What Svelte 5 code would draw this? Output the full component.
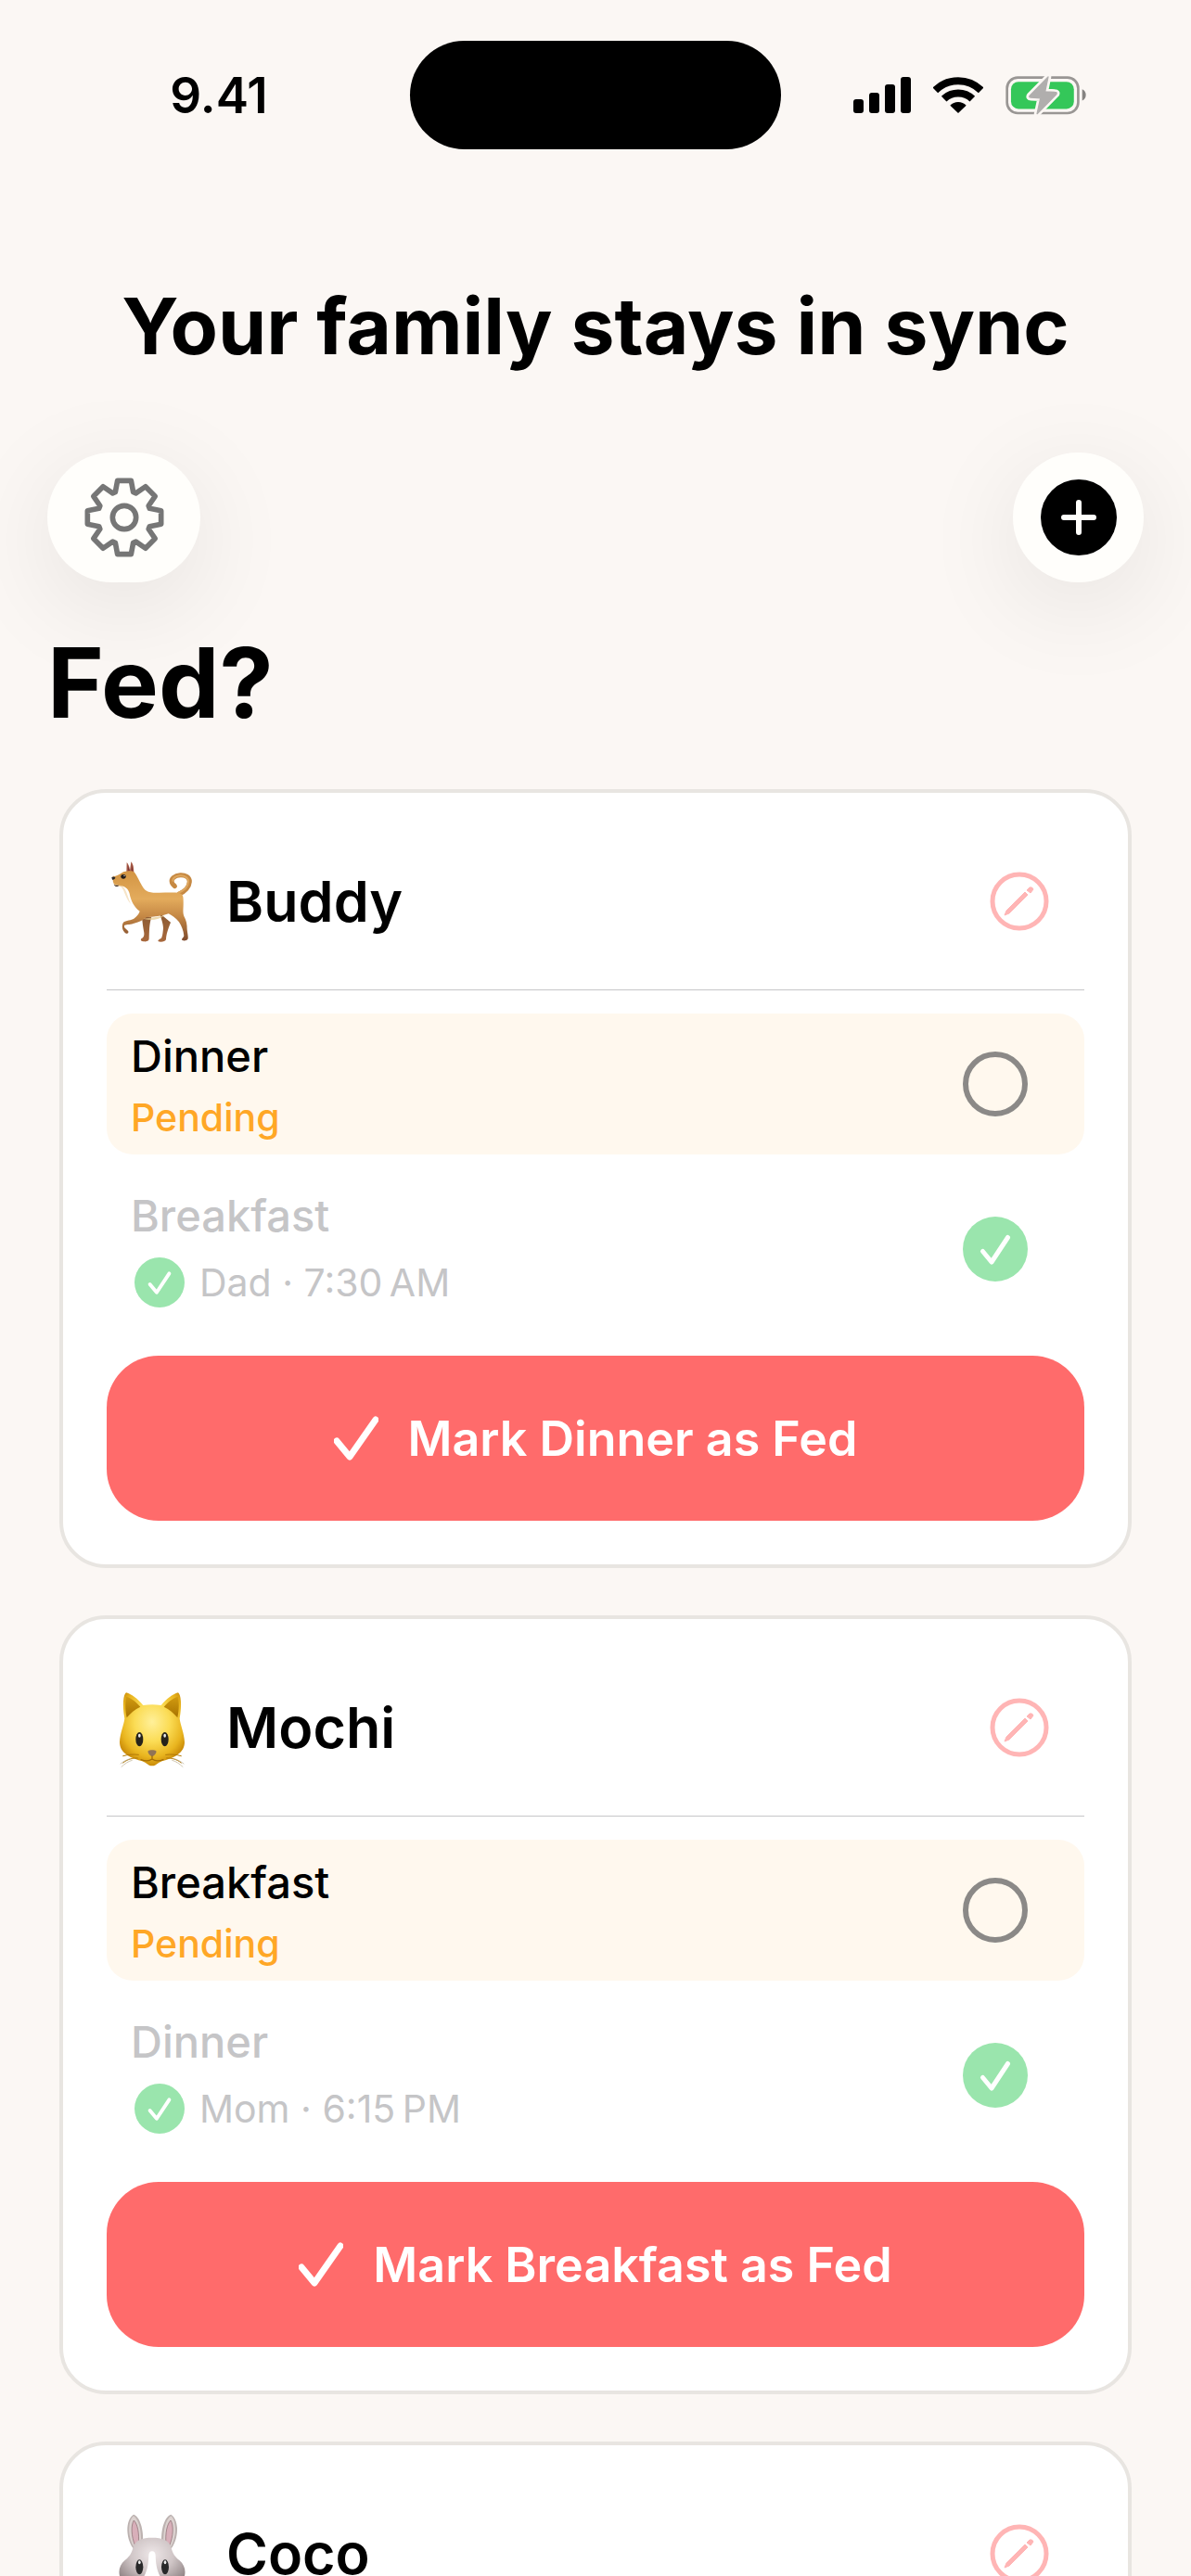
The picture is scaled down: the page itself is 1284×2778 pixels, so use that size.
<script lang="ts">
	type Meal = {
		name: string;
		fedBy?: string;
		time?: string;
	};

	type Pet = {
		name: string;
		kind: 'dog' | 'cat' | 'rabbit';
		meals: Meal[];
	};

	const pets: Pet[] = [
		{
			name: 'Buddy',
			kind: 'dog',
			meals: [{ name: 'Dinner' }, { name: 'Breakfast', fedBy: 'Dad', time: '7:30\u202fAM' }]
		},
		{
			name: 'Mochi',
			kind: 'cat',
			meals: [{ name: 'Breakfast' }, { name: 'Dinner', fedBy: 'Mom', time: '6:15\u202fPM' }]
		},
		{ name: 'Coco', kind: 'rabbit', meals: [] }
	];

	// one tooth of the gear, repeated every 45 degrees
	const tooth = [
		[-29, -82],
		[-22, -119],
		[22, -119],
		[29, -82]
	];

	function gearPoints(): string {
		const points: string[] = [];
		for (let i = 0; i < 8; i++) {
			const a = (i * Math.PI) / 4;
			for (const [x, y] of tooth) {
				const px = x * Math.cos(a) - y * Math.sin(a);
				const py = x * Math.sin(a) + y * Math.cos(a);
				points.push(`${px.toFixed(1)},${py.toFixed(1)}`);
			}
		}
		return points.join(' ');
	}

	function nextMeal(pet: Pet): Meal | undefined {
		return pet.meals.find((meal) => !meal.fedBy);
	}
</script>

{#snippet checkCircle()}
	<svg viewBox="0 0 70 70" aria-hidden="true">
		<circle cx="35" cy="35" r="35" fill="#9ae5ad" />
		<path
			d="M21.500 37.500 31 49 48.500 22.500"
			fill="none"
			stroke="#fff"
			stroke-width="5"
			stroke-linecap="round"
			stroke-linejoin="round"
		/>
	</svg>
{/snippet}

{#snippet petIcon(kind: Pet['kind'])}
	<svg class="petIcon" viewBox={kind === 'dog' ? '15 37 294 294' : '0 0 294 294'} aria-hidden="true">
		{#if kind === 'dog'}
			<defs>
				<linearGradient id="dogCoat" x1="0" y1="0" x2="0" y2="1">
					<stop offset="0" stop-color="#d39544" />
					<stop offset="0.4" stop-color="#e3ab5c" />
					<stop offset="0.65" stop-color="#c58845" />
					<stop offset="1" stop-color="#7e4a2c" />
				</linearGradient>
				<linearGradient id="dogLeg" x1="0" y1="0" x2="0" y2="1">
					<stop offset="0" stop-color="#8a5a33" />
					<stop offset="1" stop-color="#a8683c" />
				</linearGradient>
			</defs>
			<path
				d="M129 230c1 22 4 40 7 56 1 8-1 15-9 19-4 6 1 9 8 9 12 1 17-2 17-9 1-24 0-45 8-70zM186 222c7 22 12 36 12 49-1 12-2 25-6 32-6 3-11 5-11 10 7 4 24 2 26-6 1-17 6-32 15-55z"
				fill="url(#dogLeg)"
			/>
			<path
				d="M250 160c18-8 32-23 33-39 1-15-14-23-30-22-18 1-31 12-27 24 2 6 7 9 9 12"
				fill="none"
				stroke="#c68943"
				stroke-width="15"
				stroke-linecap="round"
			/>
			<path
				d="M245 157c20-7 33-21 34-36 1-14-13-21-27-20-14 1-24 8-23 16"
				fill="none"
				stroke="#dea75f"
				stroke-width="6"
				stroke-linecap="round"
			/>
			<path
				d="M79 92 80 58c5 5 9 14 10 26l4-28c7 8 9 18 9 38z"
				fill="#a85c47"
			/>
			<path d="M84 84 83 67l7 18zM95 84l1-20 4 23z" fill="#7c3335" />
			<path
				d="M32 106C45 103 55 98 64 92c12-7 30-8 41-2 9 12 15 28 24 43 6 11 13 18 21 20 24 7 71 0 99 4 12 3 14 11 14 24 1 22-3 38 2 51 8 14 10 26 10 43 1 10 4 24 3 30-4 9-20 7-20 3 0-5 7-7 7-13-2-17-8-32-16-44-10-13-24-22-34-27-22 8-48 11-71 11-10 10-26 17-43 21-12 4-25 2-29 7-2 7 8 12 13 18 2 11-10 8-13 2-7-8-9-22-3-31 7-7 27-7 34-12 10-8 17-16 19-24-18-14-29-34-33-57-4-14-10-20-21-24-14-2-27 0-31-10-3-8-3-18 2-24z"
				fill="url(#dogCoat)"
			/>
			<path d="M37 127c12 2 23 2 29 8 12 8 16 31 27 58-19-20-20-47-32-56-9-2-19 0-24-10z" fill="#e9bb74" opacity=".4" />
			<path d="M133 240c25-2 48-6 70-10-18 14-48 18-70 10z" fill="#e5c98d" opacity=".7" />
			<path d="M31 107c4-4 10-3 12 0 0 5-6 8-10 7z" fill="#29272a" />
			<path d="M38 129c5 4 12 4 17 3-4 6-13 6-17-3z" fill="#37251d" />
			<ellipse cx="69" cy="104" rx="8" ry="7" fill="#231c19" />
			<circle cx="72" cy="101" r="2" fill="#fff" />
		{:else if kind === 'cat'}
			<defs>
				<radialGradient id="catFace" cx=".5" cy=".4" r=".6">
					<stop offset="0" stop-color="#fff09a" />
					<stop offset=".45" stop-color="#fbdc55" />
					<stop offset=".8" stop-color="#e9b51f" />
					<stop offset="1" stop-color="#c98a08" />
				</radialGradient>
				<linearGradient id="catEar" x1="0" y1="0" x2="0" y2="1">
					<stop offset="0" stop-color="#d19a10" />
					<stop offset="1" stop-color="#a87300" />
				</linearGradient>
			</defs>
			<path
				d="M63 34c18 5 38 21 55 41q29-5 58 0c17-20 37-36 55-41 9 6 13 39 5 84 2 20 15 49 16 76 0 35-35 51-68 60-14 2-24 17-37 17s-23-15-37-17c-33-9-68-25-68-60 1-27 14-56 16-76-8-45-4-78 5-84z"
				fill="url(#catFace)"
			/>
			<path d="M64 47c16 5 33 18 45 33-18 8-32 21-44 35-5-24-6-52-1-68zM230 47c-16 5-33 18-45 33 18 8 32 21 44 35 5-24 6-52 1-68z" fill="url(#catEar)" />
			<ellipse cx="106" cy="185" rx="12" ry="23" fill="#26231b" />
			<ellipse cx="188" cy="185" rx="12" ry="23" fill="#26231b" />
			<ellipse cx="106" cy="173" rx="4" ry="6" fill="#eee" />
			<ellipse cx="188" cy="173" rx="4" ry="6" fill="#eee" />
			<path d="M134 223c6-4 20-4 26 0 3 5-8 18-13 18s-16-13-13-18z" fill="#917456" />
			<g fill="none" stroke-linecap="round">
				<path d="M147 240v10M111 251c13 5 27 5 36-2 9 7 23 7 36 2" stroke="#a56e05" stroke-width="4" />
				<path d="M103 235c-17-2-33-1-50 4M100 246c-17-1-33 4-47 15M191 235c17-2 33-1 50 4M194 246c17-1 33 4 47 15" stroke="#b27a08" stroke-width="3" />
				<path d="M76 248c-13 3-23 10-31 16M82 253c-14 4-24 12-34 21M218 248c13 3 23 10 31 16M212 253c14 4 24 12 34 21" stroke="#b8aa8d" stroke-width="2" />
			</g>
		{:else}
			<defs>
				<radialGradient id="rabbitFace" cx=".5" cy=".3" r=".65">
					<stop offset="0" stop-color="#eee7e8" />
					<stop offset=".5" stop-color="#d0c6c7" />
					<stop offset="1" stop-color="#8d8182" />
				</radialGradient>
			</defs>
			<path d="M87 20c19 5 34 47 30 94l-31 16c-14-17-20-46-19-66 1-20 9-38 20-44zM208 20c-19 5-34 47-30 94l31 16c14-17 20-46 19-66-1-20-9-38-20-44z" fill="#bcb2b0" />
			<path d="M87 25c15 8 26 44 24 87l-24 12c-10-19-16-43-14-62 1-18 6-31 14-37zM208 25c-15 8-26 44-24 87l24 12c10-19 16-43 14-62-1-18-6-31-14-37z" fill="#dcd2d0" />
			<path d="M88 39c12 12 18 42 15 76l-11 6c-13-31-14-67-4-82zM207 39c-12 12-18 42-15 76l11 6c13-31 14-67 4-82z" fill="#d8afb9" stroke="#85686d" stroke-width="2" />
			<path
				d="M147 95c31 0 56 7 62 33 5 20 12 28 26 40 31 25 22 75-19 90-25 10-44 15-69 15s-44-5-69-15c-41-15-50-65-19-90 14-12 21-20 26-40 6-26 31-33 62-33z"
				fill="url(#rabbitFace)"
			/>
			<path d="M147 139c7 0 11 5 11 14 1 24 3 49 18 72l-29 27-29-27c15-23 17-48 18-72 0-9 4-14 11-14z" fill="#fff" />
			<ellipse cx="106" cy="190" rx="12" ry="24" fill="#29292a" />
			<ellipse cx="189" cy="190" rx="12" ry="24" fill="#29292a" />
			<ellipse cx="106" cy="175" rx="4" ry="6" fill="#eee" />
			<ellipse cx="189" cy="175" rx="4" ry="6" fill="#eee" />
			<path d="M137 226h20l-10 12z" fill="#d8909c" />
		{/if}
	</svg>
{/snippet}

<div class="screen">
	<div class="statusBar">
		<div class="statusTime">9.41</div>
		<div class="island"></div>
		<div class="statusIcons">
			<svg class="signal" viewBox="0 0 62 39" aria-hidden="true">
				<rect x="0" y="24" width="11" height="15" rx="3" />
				<rect x="17" y="17" width="11" height="22" rx="3" />
				<rect x="34" y="8" width="11" height="31" rx="3" />
				<rect x="51" y="0" width="11" height="39" rx="3" />
			</svg>
			<svg class="wifi" viewBox="-81 -117 162 117" aria-hidden="true">
				<path d="M-74-74A105 105 0 0 1 74-74M-46-46A66 66 0 0 1 46-46" fill="none" stroke="#000" stroke-width="24" />
				<path d="M0 0-26-25A37 37 0 0 1 26-25Z" />
			</svg>
			<svg class="battery" viewBox="612 64 264 130" aria-hidden="true">
				<rect x="616" y="72" width="232" height="116" rx="35" fill="none" stroke="#999694" stroke-width="8" />
				<rect x="629" y="86" width="205" height="88" rx="24" fill="#34c759" />
				<path d="M861 110c16 7 16 30 0 37z" fill="#858381" />
				<path
					d="M750 70 690 131Q686 137 694 137L725 139 714 190 777 126Q780 120 772 120L740 118Z"
					fill="#fbf7f4"
					stroke="#fbf7f4"
					stroke-width="20"
					stroke-linejoin="round"
				/>
				<path
					d="M750 70 690 131Q686 137 694 137L725 139 714 190 777 126Q780 120 772 120L740 118Z"
					fill="#b0aead"
					stroke="#b0aead"
					stroke-width="4"
					stroke-linejoin="round"
				/>
			</svg>
		</div>
	</div>

	<p class="tagline">Your family stays in sync</p>

	<header class="toolbar">
		<button class="toolButton settings" aria-label="Settings">
			<svg viewBox="-129 -129 258 258" fill="none" stroke="#767676" stroke-width="17" stroke-linejoin="round">
				<polygon points={gearPoints()} />
				<circle r="38" />
			</svg>
		</button>
		<button class="toolButton" aria-label="Add pet">
			<svg viewBox="0 0 82 82">
				<circle cx="41" cy="41" r="41" />
				<path d="M41 25v32M25 41h32" stroke="#fffefb" stroke-width="6" stroke-linecap="round" />
			</svg>
		</button>
	</header>

	<h1>Fed?</h1>

	<main class="petList">
		{#each pets as pet (pet.name)}
			{@const next = nextMeal(pet)}
			<article class="petCard">
				<div class="petHeader">
					{@render petIcon(pet.kind)}
					<h2>{pet.name}</h2>
					<button class="editButton" aria-label="Edit {pet.name}">
						<svg viewBox="0 0 64 64">
							<circle cx="32" cy="32" r="29" fill="none" stroke="#ffb5b5" stroke-width="5" />
							<path d="M16 47 18 42 38 22 41 25 21 45ZM40 20 43 17Q46 16 47 19L44 23Z" fill="#ffb5b5" stroke="#ffb5b5" stroke-linejoin="round" />
						</svg>
					</button>
				</div>
				<ul class="meals">
					{#each pet.meals as meal (meal.name)}
						<li class="meal" class:pending={!meal.fedBy}>
							<div class="mealText">
								<h3>{meal.name}</h3>
								{#if meal.fedBy}
									<div class="fedBy">
										{@render checkCircle()}
										<span>{meal.fedBy} · {meal.time}</span>
									</div>
								{:else}
									<div class="pendingLabel">Pending</div>
								{/if}
							</div>
							<div class="mealState">
								{#if meal.fedBy}
									{@render checkCircle()}
								{:else}
									<svg viewBox="0 0 70 70" aria-hidden="true">
										<circle cx="35" cy="35" r="32" fill="none" stroke="#8b8987" stroke-width="6" />
									</svg>
								{/if}
							</div>
						</li>
					{/each}
				</ul>
				{#if next}
					<button class="feedButton">
						<svg viewBox="0 0 48 48" aria-hidden="true">
							<path
								d="M3 27 17 44 45 4"
								fill="none"
								stroke="#fff"
								stroke-width="7"
								stroke-linecap="round"
								stroke-linejoin="round"
							/>
						</svg>
						Mark {next.name} as Fed
					</button>
				{/if}
			</article>
		{/each}
	</main>
</div>

<style>
	:global(body) {
		background: #fbf7f4;
	}

	.screen {
		height: 100vh;
		overflow: hidden;
		background: #fbf7f4;
		color: #000;
		font-family: Inter, 'Liberation Sans', sans-serif;
	}

	svg {
		display: block;
		flex-shrink: 0;
	}

	button {
		display: flex;
		align-items: center;
		justify-content: center;
		margin: 0;
		padding: 0;
		border: none;
		background: none;
		font-family: inherit;
		cursor: pointer;
	}

	h1,
	h2,
	h3,
	p,
	ul {
		margin: 0;
		padding: 0;
	}

	.statusBar {
		display: grid;
		grid-template-columns: 1fr 400px 1fr;
		align-items: center;
		padding-top: 44px;
	}

	.statusTime {
		padding-left: 30px;
		text-align: center;
		font-size: 53px;
		font-weight: 600;
	}

	.island {
		height: 117px;
		border-radius: 59px;
		background: #000;
	}

	.statusIcons {
		display: flex;
		align-items: center;
		justify-content: center;
		gap: 24px;
		padding-right: 34px;
	}

	.signal {
		width: 62px;
		height: 39px;
	}

	.wifi {
		width: 54px;
		height: 39px;
	}

	.battery {
		width: 88px;
		height: 43px;
	}

	.tagline {
		margin-top: 137px;
		text-align: center;
		font-size: 84px;
		font-weight: 700;
		line-height: 108px;
	}

	.toolbar {
		display: flex;
		justify-content: space-between;
		padding: 82px 51px 0;
	}

	.toolButton {
		width: 141px;
		height: 140px;
		border-radius: 70px;
		background: #fffefb;
		box-shadow: 0 24px 110px rgba(0, 0, 0, 0.09);

		svg {
			width: 82px;
			height: 82px;
		}
	}

	.settings {
		width: 165px;

		svg {
			width: 86px;
			height: 86px;
		}
	}

	h1 {
		position: relative;
		padding: 44px 51px 0;
		font-size: 104px;
		font-weight: 700;
		line-height: 128px;
	}

	.petList {
		display: grid;
		gap: 51px;
		padding: 51px 64px;
	}

	.petCard {
		box-sizing: border-box;
		padding: 47px;
		border: 4px solid #e8e5e1;
		border-radius: 50px;
		background: #fff;
	}

	.petHeader {
		display: flex;
		align-items: center;
		gap: 31px;
		height: 139px;
		padding-bottom: 26px;
		border-bottom: 1px solid #c6c6c8;

		h2 {
			flex: 1;
			font-size: 61px;
			font-weight: 600;
			line-height: 76px;
		}
	}

	.petIcon {
		width: 98px;
		height: 98px;
	}

	.editButton {
		margin-right: 38px;

		svg {
			width: 64px;
			height: 64px;
		}
	}

	.meals {
		display: grid;
		gap: 20px;
		margin-top: 25px;
		list-style: none;
	}

	.meal {
		display: flex;
		align-items: center;
		justify-content: space-between;
		padding: 16px 61px 16px 26px;
		border-radius: 28px;
		color: #c5c5c7;

		h3 {
			font-size: 47px;
			font-weight: 500;
			line-height: 60px;
		}
	}

	.meal.pending {
		background: #fff8ee;

		h3 {
			color: #000;
		}
	}

	.mealText {
		display: grid;
		gap: 12px;
	}

	.pendingLabel {
		color: #ffa726;
		font-size: 41px;
		font-weight: 500;
		line-height: 48px;
	}

	.fedBy {
		display: flex;
		align-items: center;
		gap: 16px;
		padding-left: 4px;
		font-size: 41px;
		line-height: 60px;

		svg {
			width: 54px;
			height: 54px;
		}
	}

	.mealState svg {
		width: 70px;
		height: 70px;
	}

	.feedButton {
		gap: 32px;
		width: 100%;
		height: 178px;
		margin-top: 33px;
		border-radius: 56px;
		background: #ff6b6b;
		color: #fff;
		font-size: 52px;
		font-weight: 600;

		svg {
			width: 48px;
			height: 48px;
		}
	}
</style>
